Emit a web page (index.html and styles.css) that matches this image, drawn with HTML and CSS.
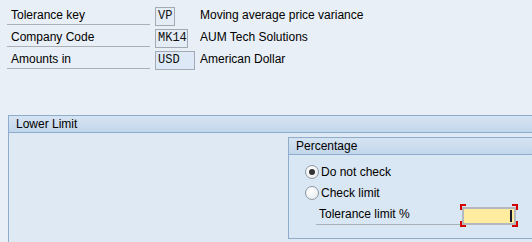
FILE: index.html
```html
<!DOCTYPE html>
<html>
<head>
	<meta charset="utf-8"/>
	<title>Tolerance key</title>
	<link rel="stylesheet" href="styles.css">
</head>
<body>
	<div class="head">
		<div class="row">
			<span class="lbl">Tolerance key</span>
			<span class="cell"><span class="fld w2">VP</span></span>
			<span class="desc">Moving average price variance</span>
		</div>
		<div class="row">
			<span class="lbl">Company Code</span>
			<span class="cell"><span class="fld w4">MK14</span></span>
			<span class="desc">AUM Tech Solutions</span>
		</div>
		<div class="row">
			<span class="lbl">Amounts in</span>
			<span class="cell"><span class="fld w5 open">USD</span></span>
			<span class="desc">American Dollar</span>
		</div>
	</div>

	<div class="group lower">
		<div class="gtitle">Lower Limit</div>
		<div class="gbody">
			<div class="group pct">
				<div class="gtitle">Percentage</div>
				<div class="pbody">
					<div class="opt"><span class="radio on"></span>Do not check</div>
					<div class="opt"><span class="radio"></span>Check limit</div>
					<div class="tolrow">
						<span class="tlbl">Tolerance limit %</span>
						<span class="req"><span class="yfld"><span class="caret"></span></span></span>
					</div>
				</div>
			</div>
		</div>
	</div>
</body>
</html>
```

FILE: styles.css
```css
html, body { height:100%; overflow:hidden; }
body { margin:0; background:#e9eff6; font-family:"Liberation Sans", Arial, sans-serif; font-size:12px; color:#000; }

.head{padding:4px 0 0 7px;}
.row{display:flex;align-items:flex-end;height:21px;margin-bottom:1px;}
.lbl{width:143px;padding:3px 0 0 4px;line-height:17px;border-bottom:1px solid #a9b0b8;box-sizing:border-box;height:21px;}
.cell{width:50px;padding-left:5px;display:flex;align-items:flex-end;box-sizing:border-box;}
.fld{display:block;height:19px;line-height:17px;margin-bottom:-1px;box-sizing:border-box;border:1px solid #a3aab3;background:#e4ecf5;font-family:"Liberation Mono","Courier New",monospace;font-size:12px;padding-left:2px;color:#111;}
.fld.w2{width:20px;}
.fld.w4{width:33px;}
.fld.w5{width:40px;}
.fld.open{background:#dde9f6;}
.desc{padding-top:3px;line-height:17px;height:21px;box-sizing:border-box;}

.group{border:1px solid #8eaccc;background:#dfe9f4;}
.gtitle{height:16px;line-height:16px;padding-left:7px;border-bottom:1px solid #8eaccc;background:linear-gradient(#d6e4f2,#c2d6eb);}
.lower{margin:46px 0 0 8px;width:640px;height:200px;}
.lower > .gbody{padding:4px 0 0 279px;}
.pct{width:400px;height:102px;background:#d9e6f3;box-sizing:border-box;}
.pbody{padding:6px 0 0 16px;}
.opt{display:flex;align-items:center;height:21px;}
.radio{width:12px;height:12px;border:1px solid #8f99a4;border-radius:50%;background:radial-gradient(circle at 40% 35%,#ffffff,#e4e8ec);margin-right:2px;position:relative;}
.radio.on::after{content:"";position:absolute;left:3px;top:3px;width:6px;height:6px;border-radius:50%;background:#333;}
.tolrow{display:flex;align-items:flex-end;margin:1px 0 0 11px;}
.tlbl{width:144px;padding-left:3px;height:21px;line-height:21px;border-bottom:1px solid #a9b0b8;box-sizing:border-box;}
.req{display:block;padding:3px 2px 2px 2px;margin-bottom:-2px;background:
	linear-gradient(#d40000,#d40000) left top/6px 2px no-repeat,
	linear-gradient(#d40000,#d40000) left top/2px 6px no-repeat,
	linear-gradient(#d40000,#d40000) right top/6px 2px no-repeat,
	linear-gradient(#d40000,#d40000) right top/2px 6px no-repeat,
	linear-gradient(#d40000,#d40000) left bottom/6px 2px no-repeat,
	linear-gradient(#d40000,#d40000) left bottom/2px 6px no-repeat,
	linear-gradient(#d40000,#d40000) right bottom/6px 2px no-repeat,
	linear-gradient(#d40000,#d40000) right bottom/2px 6px no-repeat;}
.yfld{display:flex;justify-content:flex-end;width:54px;height:18px;box-sizing:border-box;border:2px solid #b4b9bf;background:#ffec9e;padding:1px 2px 1px 0;}
.caret{width:2px;background:#1a1a2a;}
```
